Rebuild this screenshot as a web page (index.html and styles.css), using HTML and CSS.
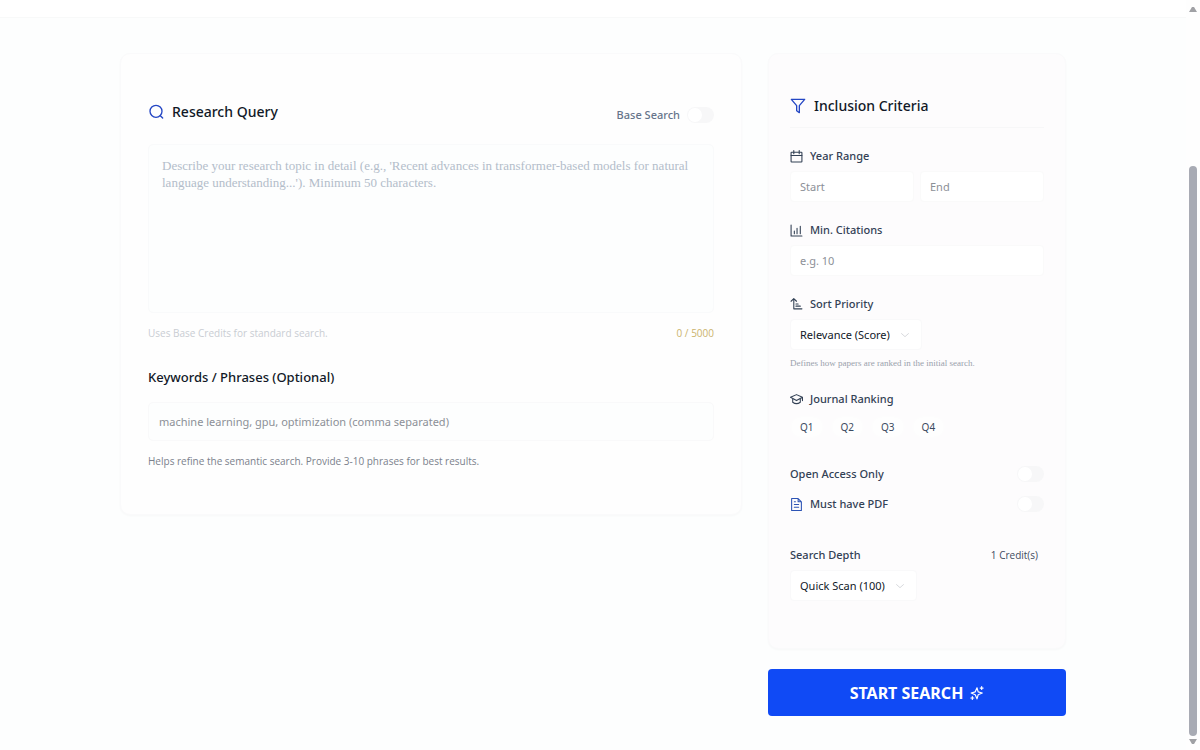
FILE: index.html
```html
<!DOCTYPE html>
<html lang="en">
<head>
<meta charset="utf-8">
<meta name="viewport" content="width=device-width, initial-scale=1">
<title>Research Search</title>
<link rel="stylesheet" href="styles.css">
</head>
<body>
<div class="shell">
  <div class="page">
    <header class="topbar"></header>
    <main class="layout">
      <section class="card query">
        <div class="query-head">
          <h2 class="title">
            <svg class="icon icon-md accent" viewBox="0 0 24 24"><circle cx="12" cy="11" r="9"/><path d="m22 21-3.500-3.500"/></svg>
            <label for="topic">Research Query</label>
          </h2>
          <label class="switch-label muted">Base Search <input class="switch" type="checkbox" role="switch"></label>
        </div>
        <textarea class="topic" id="topic" placeholder="Describe your research topic in detail (e.g., 'Recent advances in transformer-based models for natural language understanding...'). Minimum 50 characters."></textarea>
        <div class="topic-meta">
          <span>Uses Base Credits for standard search.</span>
          <span class="counter">0 / 5000</span>
        </div>
        <label class="subtitle" for="keywords">Keywords / Phrases (Optional)</label>
        <input class="keywords" id="keywords" type="text" placeholder="machine learning, gpu, optimization (comma separated)">
        <p class="help">Helps refine the semantic search. Provide 3-10 phrases for best results.</p>
      </section>

      <form class="side">
        <div class="card criteria">
          <h2 class="title criteria-title">
            <svg class="icon icon-md accent" viewBox="0 0 24 24"><path d="M22 2H2l8 9.500V19l4 3V11.500z"/></svg>
            Inclusion Criteria
          </h2>
          <div class="group">
            <label class="label" for="year-start">
              <svg class="icon" viewBox="0 0 24 24"><rect x="2" y="4" width="20" height="18" rx="1"/><path d="M7 1v6M17 1v6M2 10h20"/></svg>
              Year Range
            </label>
            <div class="years">
              <input class="field" id="year-start" type="text" placeholder="Start">
              <input class="field" type="text" placeholder="End" aria-label="Year end">
            </div>
          </div>
          <div class="group">
            <label class="label" for="citations">
              <svg class="icon" viewBox="0 0 24 24"><path d="M2 2v20h20M8 18v-5M13 18V8M19 18V4"/></svg>
              Min. Citations
            </label>
            <input class="field" id="citations" type="text" placeholder="e.g. 10">
          </div>
          <div class="group">
            <label class="label" for="sort">
              <svg class="icon" viewBox="0 0 24 24"><path d="m2 6 5-5 5 5M7 1v19h15M11 11h4M11 15h8"/></svg>
              Sort Priority
            </label>
            <span class="select-wrap">
              <select class="select" id="sort"><option>Relevance (Score)</option></select>
              <svg class="chevron" viewBox="0 0 24 24"><path d="m3 8 9 8 9-8"/></svg>
            </span>
            <p class="hint">Defines how papers are ranked in the initial search.</p>
          </div>
          <div class="group ranking">
            <span class="label">
              <svg class="icon" viewBox="0 0 24 24"><path d="M1 8 12 3l11 5-11 6zM5 11v6c4 3 10 3 14 0v-6M23 8v6"/></svg>
              Journal Ranking
            </span>
            <div class="chips">
              <button class="chip" type="button">Q1</button>
              <button class="chip" type="button">Q2</button>
              <button class="chip" type="button">Q3</button>
              <button class="chip" type="button">Q4</button>
            </div>
          </div>
          <div class="toggles">
            <label class="toggle-row"><span class="label">Open Access Only</span><input class="switch" type="checkbox" role="switch"></label>
            <label class="toggle-row">
              <span class="label">
                <svg class="icon file" viewBox="0 0 24 24"><path d="M15 1H3v22h18V7zM15 1v6h6M8 12h8M8 17h8M8 7h2"/></svg>
                Must have PDF
              </span>
              <input class="switch" type="checkbox" role="switch">
            </label>
          </div>
          <div class="group">
            <div class="depth-head">
              <label class="label" for="depth">Search Depth</label>
              <span class="credits">1 Credit(s)</span>
            </div>
            <span class="select-wrap">
              <select class="select" id="depth"><option>Quick Scan (100)</option></select>
              <svg class="chevron" viewBox="0 0 24 24"><path d="m3 8 9 8 9-8"/></svg>
            </span>
          </div>
        </div>
        <button class="start" type="button">
          START SEARCH
          <svg class="icon icon-sparkle" viewBox="0 0 24 24"><path d="M12 3l2 7 7 2-7 3-2 7-3-7-7-3 7-2zM20 1v5M17.500 3.500h5M4 18v5M1.500 20.500h5"/></svg>
        </button>
      </form>
    </main>
  </div>
  <div class="rail" aria-hidden="true">
    <svg class="arrow" viewBox="0 0 8 6"><path d="M0 6 3 1h2l3 5z"/></svg>
    <div class="track"><div class="thumb"></div></div>
    <svg class="arrow" viewBox="0 0 8 6"><path d="M0 0h8L5 5H3z"/></svg>
  </div>
</div>
</body>
</html>
```
FILE: styles.css
```css
* { box-sizing: border-box; }

body {
  margin: 0;
  background: #fdfefe;
  color: #111827;
  font-family: "Noto Sans", "Open Sans", sans-serif;
  font-size: 11px;
  line-height: 16px;
}

h2, p { margin: 0; }
input, textarea, select, button { font: inherit; color: inherit; }

.shell { display: flex; height: 100vh; overflow: hidden; }
.page { flex: 1; min-width: 0; }
.topbar { height: 18px; background: #fff; border-bottom: 1px solid #f8f9f9; }

.layout {
  display: grid;
  grid-template-columns: minmax(0, 1fr) 298px;
  gap: 26px;
  align-items: start;
  max-width: 946px;
  margin: 35px auto 0;
}

.card {
  border: 1px solid #fafafb;
  border-radius: 10px;
  background: #fefefe;
  box-shadow: 0 1px 2px #f7f8f8;
}

.query { display: flex; flex-direction: column; padding: 47px 27px 45px; }
.query-head { display: flex; justify-content: space-between; align-items: flex-start; padding-bottom: 21px; }

.title {
  display: flex;
  align-items: center;
  gap: 8px;
  font-size: 14px;
  font-weight: 500;
  line-height: 21px;
}

.icon {
  flex: none;
  width: 13px;
  height: 13px;
  fill: none;
  stroke: currentColor;
  stroke-width: 2;
  stroke-linecap: round;
  stroke-linejoin: round;
}
.icon-md { width: 16px; height: 16px; }
.icon-sparkle { width: 14px; height: 14px; }
.accent { color: #2446c4; }

.switch-label { display: flex; align-items: center; gap: 7px; padding-top: 6px; }
.muted { color: #66748a; font-weight: 500; }

.switch {
  appearance: none;
  display: flex;
  width: 27px;
  height: 16px;
  margin: 0;
  padding: 1px;
  border-radius: 8px;
  background: #f7f7f8;
}
.switch::before { content: ""; width: 14px; height: 14px; border-radius: 50%; background: #fff; }
.switch:checked { justify-content: flex-end; background: #104af5; }

.topic {
  width: 100%;
  height: 169px;
  padding: 12px 13px;
  border: 1px solid #f9fafb;
  border-radius: 5px;
  background: #fdfefe;
  font-family: "Liberation Serif", serif;
  font-size: 13px;
  line-height: 17px;
  resize: none;
}
.topic::placeholder { color: #b3bdca; opacity: 1; }

.topic-meta {
  display: flex;
  justify-content: space-between;
  padding-top: 12px;
  color: #c9cdd3;
  font-size: 10px;
}
.topic-meta, .help { font-family: "Open Sans", "Noto Sans", sans-serif; }
.counter { color: #cbb36c; }

.subtitle { padding-top: 26px; font-size: 13px; font-weight: 500; line-height: 20px; }
.keywords {
  width: 100%;
  height: 39px;
  margin-top: 15px;
  padding: 0 10px;
  border: 1px solid #f9f9fa;
  border-radius: 5px;
  background: #fdfefe;
}
::placeholder { color: #8c9097; opacity: 1; }
.help { padding-top: 12px; color: #7b818c; font-size: 10px; }

.side { display: flex; flex-direction: column; gap: 20px; }
.criteria { padding: 41px 21px 47px; background: #fdfcfd; }
.criteria-title { padding-bottom: 11px; border-bottom: 1px solid #f7f7f8; }

.group { display: flex; flex-direction: column; align-items: flex-start; gap: 7px; padding-top: 20px; }
.label { display: flex; align-items: center; gap: 7px; color: #334155; font-weight: 500; }
.years { display: grid; grid-template-columns: 1fr 1fr; gap: 6px; width: 100%; }
.field {
  width: 100%;
  min-width: 0;
  height: 31px;
  padding: 0 9px;
  border: 1px solid #fafafa;
  border-radius: 4px;
  background: #fff;
}

.select-wrap { display: grid; align-items: center; }
.select {
  grid-area: 1 / 1;
  appearance: none;
  height: 31px;
  padding: 0 31px 0 9px;
  border: 1px solid #f9f9fa;
  border-radius: 4px;
  background: #fff;
}
.chevron {
  grid-area: 1 / 1;
  justify-self: end;
  width: 10px;
  height: 10px;
  margin-right: 12px;
  fill: none;
  stroke: #d0d2d6;
  stroke-width: 2;
  pointer-events: none;
}
.hint { color: #9aa1ac; font-family: "Liberation Serif", serif; font-size: 9px; line-height: 12px; }

.ranking { gap: 9px; padding-top: 22px; }
.chips { display: flex; gap: 7px; }
.chip {
  height: 22px;
  padding: 0 9px;
  border: 1px solid #fdfdfd;
  border-radius: 11px;
  background: #fefefe;
  color: #3c4a60;
  font-size: 10px;
}

.toggles { display: flex; flex-direction: column; gap: 14px; padding-top: 28px; }
.toggle-row { display: flex; align-items: center; justify-content: space-between; }
.file { color: #2d54b5; }
.toggles + .group { padding-top: 35px; }
.depth-head { display: flex; justify-content: space-between; width: 100%; padding-right: 6px; }
.credits { color: #3f4b60; font-size: 10px; font-family: "Open Sans", "Noto Sans", sans-serif; }

.start {
  display: flex;
  align-items: center;
  justify-content: center;
  gap: 7px;
  height: 47px;
  border: 0;
  border-radius: 4px;
  background: #104af5;
  color: #fff;
  font-size: 16px;
  font-weight: 700;
}

.rail {
  display: flex;
  flex-direction: column;
  align-items: center;
  gap: 3px;
  width: 14px;
  padding: 6px 0 5px;
  background: #fefefe;
}
.arrow { width: 8px; height: 6px; fill: #a0a1a5; }
.track { display: flex; flex: 1; align-items: flex-end; }
.thumb { width: 8px; height: 79%; border-radius: 4px; background: #a8abb4; }
```
